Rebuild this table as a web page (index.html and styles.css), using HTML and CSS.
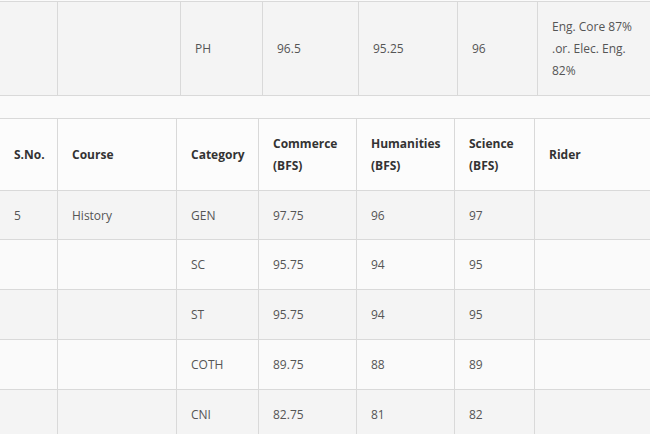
FILE: index.html
```html
<!DOCTYPE html>
<html>
<head>
<meta charset="utf-8">
<link rel="stylesheet" href="styles.css">
</head>
<body>
<div class="page">
  <table class="cutoff top">
    <colgroup>
      <col class="c1"><col class="c2"><col class="c3"><col class="c4"><col class="c5"><col class="c6"><col class="c7">
    </colgroup>
    <tbody>
      <tr class="odd">
        <td></td><td></td><td>PH</td><td>96.5</td><td>95.25</td><td>96</td><td>Eng. Core 87% .or. Elec. Eng. 82%</td>
      </tr>
    </tbody>
  </table>
  <table class="cutoff bottom">
    <colgroup>
      <col class="d1"><col class="d2"><col class="d3"><col class="d4"><col class="d5"><col class="d6"><col class="d7">
    </colgroup>
    <thead>
      <tr>
        <th>S.No.</th><th>Course</th><th>Category</th><th>Commerce (BFS)</th><th>Humanities (BFS)</th><th>Science (BFS)</th><th>Rider</th>
      </tr>
    </thead>
    <tbody>
      <tr class="odd"><td>5</td><td>History</td><td>GEN</td><td>97.75</td><td>96</td><td>97</td><td></td></tr>
      <tr class="even"><td></td><td></td><td>SC</td><td>95.75</td><td>94</td><td>95</td><td></td></tr>
      <tr class="odd"><td></td><td></td><td>ST</td><td>95.75</td><td>94</td><td>95</td><td></td></tr>
      <tr class="even"><td></td><td></td><td>COTH</td><td>89.75</td><td>88</td><td>89</td><td></td></tr>
      <tr class="odd"><td></td><td></td><td>CNI</td><td>82.75</td><td>81</td><td>82</td><td></td></tr>
    </tbody>
  </table>
</div>
</body>
</html>
```

FILE: styles.css
```css
html, body {
  margin: 0;
  padding: 0;
  background: #fafafa;
}
.page {
  width: 650px;
  height: 434px;
  overflow: hidden;
  padding-top: 1px;
  box-sizing: border-box;
  font-family: "Open Sans", "Liberation Sans", sans-serif;
  font-size: 12px;
  color: #555;
}
.cutoff {
  border-collapse: collapse;
  table-layout: fixed;
  margin-left: -1px;
}
.top { width: 654px; margin-bottom: 22px; }
.bottom { width: 655px; }
.cutoff td, .cutoff th {
  border: 1px solid #d9d9d9;
  padding: 14px 14px 12.75px;
  line-height: 22px;
  text-align: left;
  vertical-align: middle;
}
.cutoff th {
  font-weight: 700;
  color: #333;
  background: #fcfcfc;
}
.odd td { background: #f4f4f4; }
.even td { background: #fafafa; }
.c1 { width: 58px; }
.c2 { width: 123px; }
.c3 { width: 82px; }
.c4 { width: 96px; }
.c5 { width: 99px; }
.c6 { width: 80px; }
.c7 { width: 116px; }
.d1 { width: 58px; }
.d2 { width: 119px; }
.d3 { width: 82px; }
.d4 { width: 98px; }
.d5 { width: 98px; }
.d6 { width: 80px; }
.d7 { width: 120px; }
```
